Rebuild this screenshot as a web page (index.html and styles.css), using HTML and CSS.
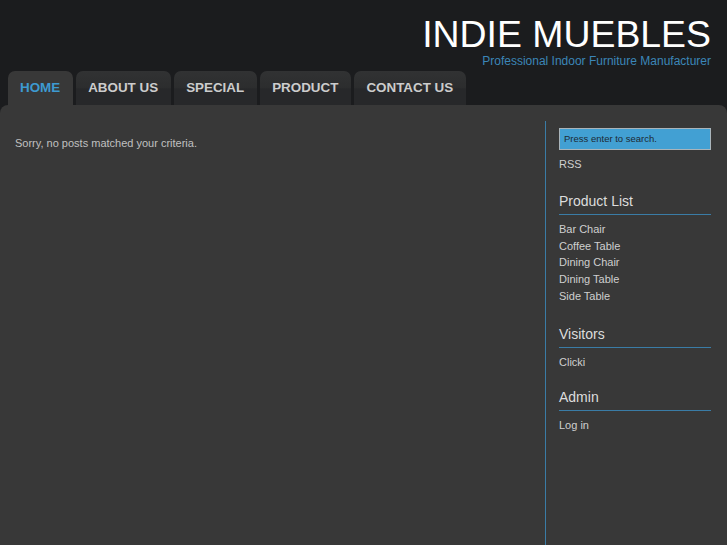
FILE: index.html
```html
<!DOCTYPE html>
<html lang="en">
<head>
<meta charset="utf-8">
<title>Indie Muebles</title>
<link rel="stylesheet" href="styles.css">
</head>
<body>
<header class="site-header">
  <h1 class="site-title">INDIE MUEBLES</h1>
  <p class="site-tagline">Professional Indoor Furniture Manufacturer</p>
</header>
<nav class="tabs">
  <a class="tab tab-active" href="#">HOME</a>
  <a class="tab" href="#">ABOUT US</a>
  <a class="tab" href="#">SPECIAL</a>
  <a class="tab" href="#">PRODUCT</a>
  <a class="tab" href="#">CONTACT US</a>
</nav>
<div class="panel">
  <main class="content">
    <p class="notice">Sorry, no posts matched your criteria.</p>
  </main>
  <aside class="sidebar">
    <div class="search">Press enter to search.</div>
    <a class="rss" href="#">RSS</a>
    <section class="widget">
      <h2 class="widget-title">Product List</h2>
      <ul class="widget-list">
        <li><a href="#">Bar Chair</a></li>
        <li><a href="#">Coffee Table</a></li>
        <li><a href="#">Dining Chair</a></li>
        <li><a href="#">Dining Table</a></li>
        <li><a href="#">Side Table</a></li>
      </ul>
    </section>
    <section class="widget widget-short">
      <h2 class="widget-title">Visitors</h2>
      <ul class="widget-list">
        <li><a href="#">Clicki</a></li>
      </ul>
    </section>
    <section class="widget">
      <h2 class="widget-title">Admin</h2>
      <ul class="widget-list">
        <li><a href="#">Log in</a></li>
      </ul>
    </section>
  </aside>
</div>
</body>
</html>
```

FILE: styles.css
```css
html, body {
  margin: 0;
  padding: 0;
  height: 100%;
}
body {
  background: #1b1c1e;
  font-family: "Liberation Sans", Arial, sans-serif;
  color: #cfcfcf;
  display: flex;
  flex-direction: column;
  overflow: hidden;
}
a { text-decoration: none; color: inherit; }

.site-header {
  padding: 14px 16px 3px 0;
  text-align: right;
}
.site-title {
  margin: 0;
  font-size: 37.4px;
  line-height: 40px;
  font-weight: 400;
  color: #ffffff;
}
.site-tagline {
  margin: 0;
  font-size: 12px;
  line-height: 14px;
  color: #3b86b8;
}

.tabs {
  display: flex;
  gap: 3px;
  padding-left: 8px;
}
.tab {
  display: block;
  padding: 1px 13px 1px 12px;
  line-height: 32px;
  font-size: 13.4px;
  font-weight: 700;
  color: #cccccc;
  border-radius: 7px 7px 0 0;
  background: linear-gradient(#313233 0%, #2c2d2e 50%, #27282a 52%, #27282a 100%);
}
.tab-active {
  background: #383838;
  color: #3d9ad0;
}

.panel {
  flex: 1;
  display: flex;
  background: #383838;
  border-radius: 8px 8px 0 0;
}
.content {
  flex: 1;
  padding: 30px 15px;
}
.notice {
  margin: 0;
  font-size: 11px;
  line-height: 17px;
  color: #c0c0c0;
}

.sidebar {
  width: 152px;
  margin: 16px 16px 0 0;
  padding: 7px 0 0 13px;
  border-left: 1px solid #3a7ca6;
}
.search {
  height: 20px;
  line-height: 19px;
  padding-left: 4px;
  font-size: 9.5px;
  color: #1d2a33;
  background: #42a0d3;
  border: 1px solid #a9b4ba;
}
.rss {
  display: block;
  margin-top: 6px;
  font-size: 11px;
  line-height: 17px;
}
.widget {
  margin-top: 20px;
}
.widget-short {
  margin-top: 21px;
}
.widget-short + .widget {
  margin-top: 19px;
}
.widget-title {
  margin: 0;
  padding-bottom: 4px;
  font-size: 14px;
  line-height: 17px;
  font-weight: 400;
  color: #dddddd;
  border-bottom: 1px solid #3a7ca6;
}
.widget-list {
  list-style: none;
  margin: 6px 0 0 0;
  padding: 0;
  font-size: 11px;
  line-height: 16.7px;
}
```
